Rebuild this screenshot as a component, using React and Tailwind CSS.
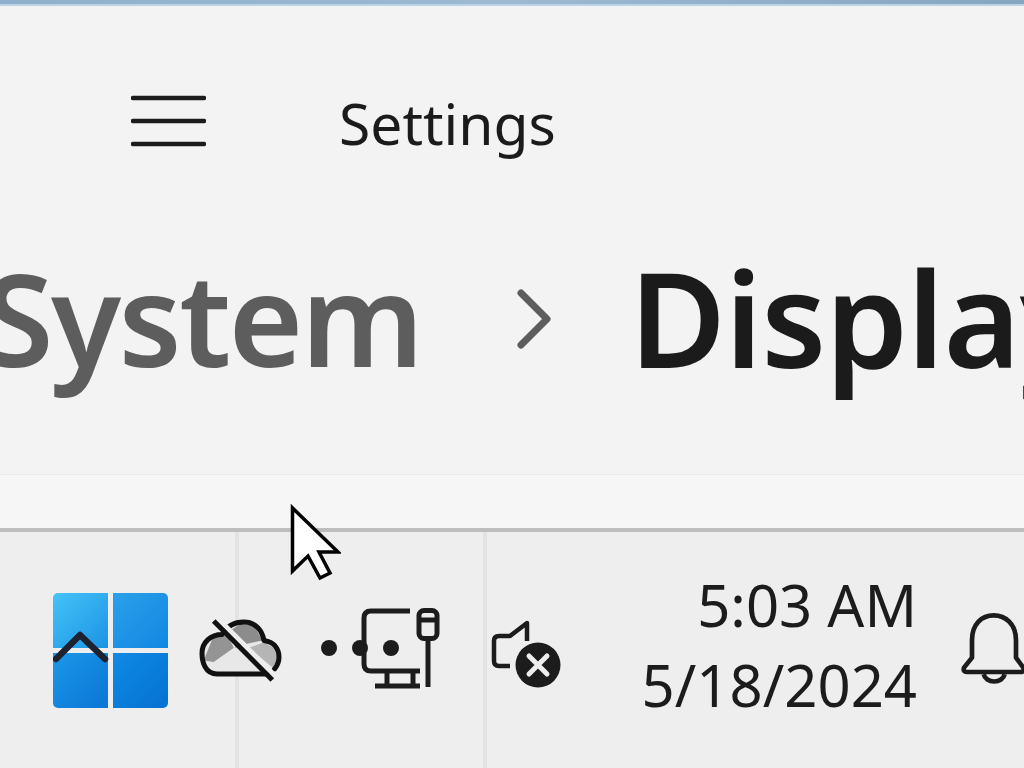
export default function App() {
  const font = { fontFamily: '"Noto Sans", sans-serif' };
  return (
    <div className="relative flex flex-col w-[1024px] h-[768px] overflow-hidden bg-[#f3f3f3] text-[#1b1b1b]" style={font}>
      <div className="h-[6px] shrink-0 bg-gradient-to-r from-[#8fb0cc] via-[#9db9d2] to-[#86a5c0] border-b-2 border-[#bcd3e6]" />
      <header className="flex items-center h-[90px] shrink-0 mt-[70px] pl-[131px]">
        <svg width="75" height="52" viewBox="0 0 75 52" className="shrink-0">
          <path d="M2 3H73M2 26H73M2 49H73" stroke="#1c1c1c" strokeWidth="4.5" strokeLinecap="round" fill="none" />
        </svg>
        <span className="ml-[133px] mt-[5px] text-[57px] leading-none text-[#1b1b1b]">Settings</span>
      </header>
      <div className="flex items-center h-[180px] shrink-0 mt-[61px] -ml-[17px] whitespace-nowrap">
        <span className="mt-[2px] text-[128px] tracking-[-2.5px] leading-none font-semibold text-[#5d5d5d]">System</span>
        <svg width="40" height="62" viewBox="0 0 40 62" className="shrink-0 ml-[93px] mt-[4px]">
          <path d="M7 5L33 31L7 57" stroke="#5d5d5d" strokeWidth="7" strokeLinecap="round" strokeLinejoin="round" fill="none" />
        </svg>
        <span className="ml-[75px] text-[132px] tracking-[-1px] leading-none font-semibold text-[#1b1b1b]">Display</span>
      </div>
      <div className="flex-1 flex flex-col border-t border-[#e9e9e9] mt-[67px] bg-[#f6f6f6]">
        <div className="h-[53px] shrink-0" />
        <div className="h-[4px] shrink-0 bg-[#bebebe]" />
        <div className="flex-1 flex bg-[#eeeeee]">
          <div className="flex items-start w-[239px] shrink-0 border-r-[4px] border-[#e3e3e3] pl-[53px] pt-[61px]">
            <div className="relative shrink-0 w-[115px] h-[115px] grid grid-cols-2 grid-rows-2 gap-[5px]">
              <div className="rounded-tl-[5px] bg-gradient-to-br from-[#45c3f8] to-[#1a93e4]" />
              <div className="rounded-tr-[5px] bg-gradient-to-br from-[#2aa0ea] to-[#1287e2]" />
              <div className="rounded-bl-[5px] bg-gradient-to-br from-[#1c98e8] to-[#0b75d6]" />
              <div className="rounded-br-[5px] bg-gradient-to-br from-[#0f8ae4] to-[#0671d2]" />
              <svg width="56" height="32" viewBox="0 0 56 32" className="absolute left-0 top-[38px]">
                <path d="M3 28L27 4L52 28" stroke="#1c2230" strokeWidth="6.5" strokeLinecap="round" strokeLinejoin="round" fill="none" />
              </svg>
            </div>
            <svg width="87" height="67" viewBox="590 170 260 200" className="shrink-0 ml-[29px] mt-[24px]">
              <path d="M650 340C615 340 605 305 605 278C605 245 632 222 665 222C682 192 708 185 730 185C765 185 785 210 790 240C825 245 835 270 835 290L820 340Z" fill="#e8e8e8" />
              <path d="M610 300L640 304L700 262L680 225L640 225Z" fill="#949494" />
              <path d="M690 210L720 190L760 195L785 240L740 250L705 262Z" fill="#8c8c8c" />
              <path d="M745 262L790 245L825 265L830 300L815 320Z" fill="#b5b5b5" />
              <path d="M800 340H650C615 340 605 305 605 278C605 245 632 222 665 222C682 192 708 185 730 185C765 185 785 210 790 240C825 245 835 270 835 290C835 305 830 315 822 325" fill="none" stroke="#111" strokeWidth="15" strokeLinecap="round" strokeLinejoin="round" />
              <path d="M650 172L825 348" stroke="#eeeeee" strokeWidth="15" />
              <path d="M640 182L815 358" stroke="#111" strokeWidth="15" />
            </svg>
          </div>
          <div className="flex items-start w-[248px] shrink-0 border-r-[4px] border-[#e3e3e3] pl-[81px] pt-[71px]">
            <svg width="125" height="90" viewBox="0 0 125 90" className="shrink-0">
              <g fill="none" stroke="#1c1c1c" strokeWidth="5">
                <path d="M90 8H51Q44 8 44 15V61Q44 68 51 68H100" />
                <path d="M67 68V82M93 68V82M55 83H100" />
                <rect x="99" y="7.5" width="18" height="28" rx="5" />
                <path d="M99 17H117M108 35V84" />
              </g>
              <circle cx="9" cy="45" r="8" fill="#1c1c1c" />
              <circle cx="40" cy="45" r="8" fill="#1c1c1c" />
              <circle cx="71" cy="45" r="8" fill="#1c1c1c" />
            </svg>
          </div>
          <div className="flex items-start shrink-0 pl-[4px] pt-[85px]">
            <svg width="72" height="72" viewBox="0 0 72 72" className="shrink-0">
              <path d="M36 24V6L19 19H8Q3 19 3 24V44Q3 49 8 49H19" fill="none" stroke="#1c1c1c" strokeWidth="4.5" strokeLinejoin="round" />
              <circle cx="47" cy="48" r="22.5" fill="#1c1c1c" />
              <path d="M38 39L56 57M56 39L38 57" stroke="#eeeeee" strokeWidth="5" strokeLinecap="round" />
            </svg>
            <div className="flex flex-col items-end w-[277px] ml-[77px] -mt-[52px] text-[58px] leading-[80px] text-[#1c1c1c] shrink-0">
              <span>5:03 AM</span>
              <span>5/18/2024</span>
            </div>
            <svg width="66" height="72" viewBox="1008 155 196 216" className="shrink-0 ml-[44px] -mt-[5px]">
              <path d="M1040 292V240C1040 190 1070 165 1105 165C1140 165 1172 190 1172 240V292L1194 322Q1198 335 1185 335H1025Q1012 335 1016 322Z" fill="none" stroke="#1c1c1c" strokeWidth="14" strokeLinejoin="round" />
              <path d="M1075 342A32 26 0 0 0 1138 342" fill="none" stroke="#1c1c1c" strokeWidth="14" />
            </svg>
          </div>
        </div>
      </div>
      <svg width="52" height="78" viewBox="0 0 52 78" className="absolute left-[289px] top-[503px]">
        <path d="M3.5 5V68L19 53L31 75L41 70L30 49H49Z" fill="#fff" stroke="#000" strokeWidth="3.5" strokeLinejoin="miter" />
      </svg>
    </div>
  );
}
